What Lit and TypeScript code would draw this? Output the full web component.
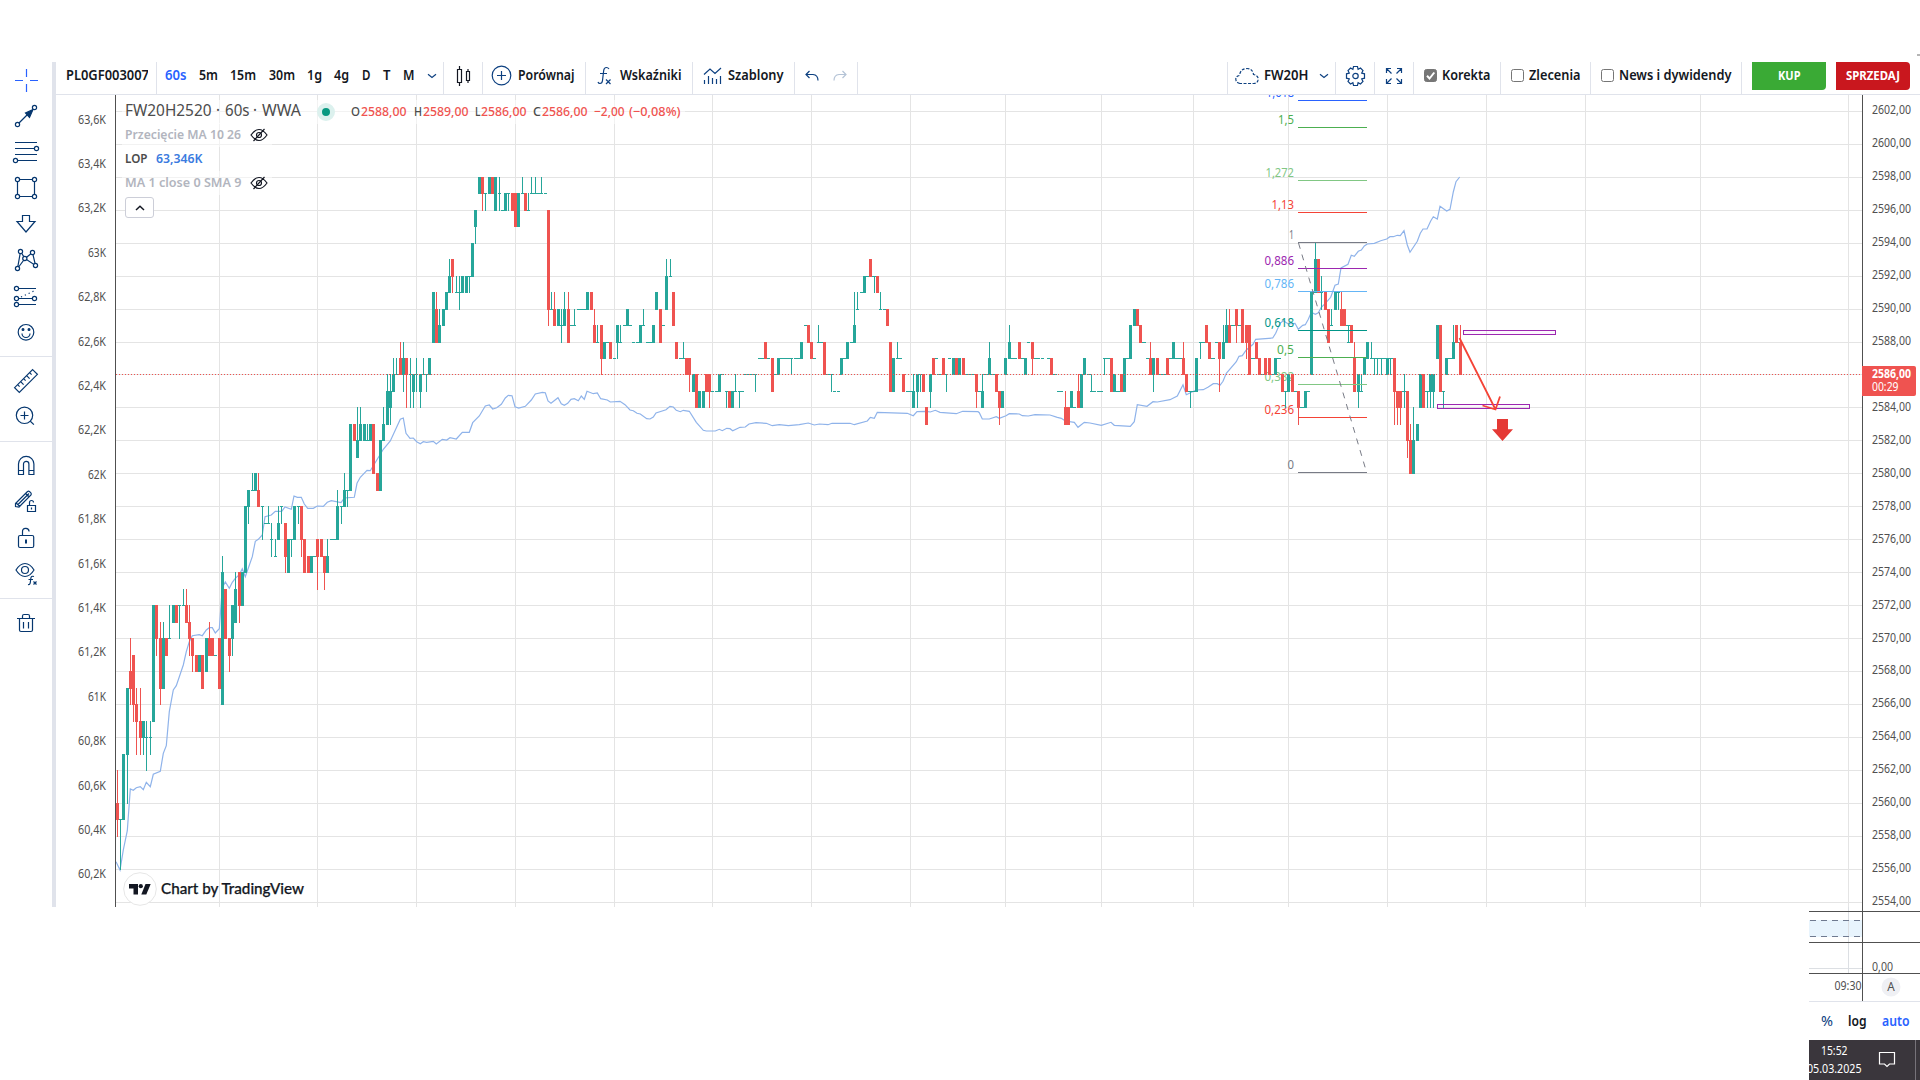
import { LitElement, html, svg, css } from "lit";
import { customElement } from "lit/decorators.js";

/* ---------- price scale ---------- */
const priceY = (p: number) => 111.3 + (102 - p) * 16.48; // p is the price minus 2500
const rowY = (p: number) => Math.floor(priceY(p));

/* Candles: "x colour bodyTop.bodyBottom[.high.low]"; "a-b=p" is a run of flat bars.
   x is counted in thirds of a pixel from the start of each segment. */
const SEGMENTS: [number, string][] = [
  [100, `52r60.59.62.58 61g59.59.59.56 70g63.59 82g67.63.67.60 91r68.67.70.66 100r69.66.69.65 109r66.65.67.63 121r65.64.67.63
  130g65.64.65.63 139g64.64.65.62 151g64.64.65.63 160g72.65 169r72.70.72.69 181r70.67.71.66 190g70.67.71.67 199r70.69
  208g70.70.72.70 220g72.71 229r72.71 238g72.72.72.70 250g72.72.73.72 259r72.71.73.71 268r71.70.72.69 277r70.69.70.68
  289r69.68 298g69.68 307r69.67 319g70.68 328r70.69.71.69 337r70.69 346g69.69 358r70.67 367g74.66.75.66 376r73.70
  388r70.69.70.68 397g72.70.72.69 406g73.71.74.71 418r74.72.74.71 427g74.72 436g78.74`],
  [0, `745g79.78.79.77 757g79.79.80.79 766g80.79 775r79.78.80.78 787g78.78.78.76 792-810=77 805g77.77.78.77 814g76.76.77.75
  826g75.75.76.75 835g77.76.78.76 844g78.78.78.77 856r77.75.77.74 865g76.74 874g76.76.76.75 883g78.76 895g78.78.78.77
  904r78.76.78.75 913r76.74 925r75.74 934g75.74 943g75.75 952r76.75.76.73 964r76.75 973r75.74.75.73 982g75.74.76.74
  991-1010=76 1012g78.76.79.76 1024g78.78.78.77 1033g79.78.80.78 1042g79.79.79.78 1051g83.79 1063r83.82 1072g82.81.84.81`],
  [330, `91g83.82.84.82 103g83.82 112g82.82.83.82 121g83.82 130r83.80 142r80.79 151g82.79 160g83.82.84.82 172g85.83.86.83
  181g85.84.86.83 190g86.85.87.85 199g86.86.87.86 211r87.86.88.86 220g87.86.88.85 229r87.86.87.84 241g86.86.87.84 250g86.85.86.84
  259g86.86.87.85 271g86.85.86.84 280g86.86.87.86 289g86.86.86.85 298g87.86 310g91.88 319r90.88.91.88 328g89.88.90.88 340g90.89
  349g91.90 358g92.91.93.91 367r93.92.93.91 379g91.91.92.91 388g91.91.92.90 397g92.91 409g92.91 418g92.92.92.91 427g94.92
  436g96.95.96.94 448g98.97 457r98.97.98.96 466g97.97.97.96 478g98.97 487r98.97 496g98.96 508g97.97.98.96 513-523=96 526g97.96
  535g97.97.97.96 547r97.96 556r97.95 565g97.95 577g97.97.98.97 586r97.96 595g96.96.97.96 604g97.97.98.97 610-640=97 616g97.97.98.97
  634g97.97.98.97 642-652=97 655r96.90.96.89 664g90.90.91.90 673r90.89.91.89 685g90.89 694g89.89.90.88 703g90.89.91.89 715r90.88.91.88
  719-738=89 733g89.89.90.89 741-768=90 772g91.90 784r91.90 793r89.88.90.88 802g88.88.89.88 814r89.87.89.86 823g88.87 828-840=88
  841r88.87 850-858=87 862g89.88.89.87 867-876=88 871g88.88.89.88 879-906=89 892g90.89 906-915=88 918-930=88 931g89.88 940g89.89.90.89
  948-970=88 970g89.88 979g91.90 991r90.88 995-1005=89 1009g92.90.93.90`],
  [650, `61g92.92.93.92 70r91.89 79r88.87 88-105=87 100g87.87.88.87 109r87.86 118r87.86.87.85 130g86.85 139r86.84 148g85.84 160g85.84
  169r86.85 178r86.85.86.84 183-192=85 195-205=85 208g86.85 212-222=86 225-234=85 229g85.85.85.84 238r85.84 247g85.84 256g85.85.86.85
  264-282=85 268g85.85.85.84 280-320=86 316g86.86.86.85 324-360=87 346r88.87 367r87.85 372-382=86 385g87.86 390-430=87 424g87.87.87.86
  432-452=87 454g88.87 462-472=89 475r89.88 484r88.87 486-498=87 501-520=88 505g88.88.89.88 523r88.86 529-551=86 544g86.86.86.85
  549-558=85 561-570=85 574g87.86 579-590=87 592g88.87 600-612=88 613g89.88.91.88 622g90.90.91.90 630-642=91 643g92.91 648-658=92
  661r93.92 664-672=92 673g92.92.92.91 682r92.91 691g90.90.91.90 698-710=90 712r90.89 721r88.85 730g87.85 738-756=87 742g87.87.88.87
  760r86.85 768-790=85 790g85.84.86.84 802g86.85.86.84 811g86.86.86.85 820r86.85 829r84.83 841g86.85.86.84 850r87.86 854-864=87
  862-876=86 880r87.86 889g86.86.86.85 894-904=87 910g87.86 919r87.86 928g87.86 940r87.86 945-975=86 979r86.85.86.84 983-990=85`],
  [970, `25-38=85 37g85.84.86.84 40-55=86 58g87.86.88.86 64-76=86 79r86.85 88r85.84.85.83 97g85.84 106g87.86 118g88.87.89.87 123-142=87
  148r88.87 153-162=87 166g87.86 170-180=88 187r88.87.88.86 190-210=87 213-222=87 230-240=87 244r87.86 249-262=86 260-280=85
  286r84.83.85.83 295r84.83 304g85.84 309-319=84 325r85.84.86.84 334g86.84 343g87.86 350-364=86 364g85.85.86.85 362-379=85 381-399=85
  403g87.87.87.86 403-420=87 424r87.85 433g86.85 438-450=85 454r86.85 463g87.85 468-480=87 481g89.87 493g90.89 502r90.89 511r89.88
  516-528=88 528-537=87 541r87.86.88.86 550g87.86.87.85 562r87.86 567-588=86 592r87.86 597-610=87 610g88.87 615-636=87 640r87.86.88.86
  649r86.85 655-676=85 661g85.85.85.84 679g87.85 691g88.88.88.87 692-706=88 709r89.88 718r88.87 723-735=87 736-745=88 748r88.87.88.85
  760g88.87.89.87 769g89.88.90.88 778r89.88.90.88 783-796=89 799r90.89.90.88 803-813=89 817r90.88 829r89.88.89.87 838r89.86 843-855=87
  859r88.87 868r87.86 872-882=86 886r87.86 898r87.86 903-912=86 916g87.86 922-933=87 937r86.85 946g85.85.85.84 955g86.85`],
  [1220, `217r86.85 222-232=85 235r85.84.85.83 240-253=84 256g85.84 260-270=85 274g91.86 279-283=91 286g93.91.94.91 295r93.91 304g91.91.92.90
  316r91.90 325r90.88 334g89.89.90.89 346g91.90 355g91.91.91.90 364r90.89.91.89 373r90.89 378-392=89 385g88.88.89.88 394r89.88
  403r87.85.88.85 415g86.85.86.84 424g85.85.86.85 433g87.86 442g88.87 454g87.87.88.87 449-520=87 463g87.87.87.86 472g87.87.87.86
  484g87.87.87.86 502g87.86 511g87.87.87.86 523r87.85.87.83 532r85.84.85.83 541r85.84.85.83 547-562=85 553g85.85.86.84 562r85.82.85.81
  571r82.80.83.80 580g82.80.84.80 592g83.82 601g86.84 610r86.84 616-628=85 622g85.85.85.84 631g86.85.86.84 640g86.85.86.84 652g89.87
  661r89.85 670g85.85.85.84 679g87.86 684-698=87 700g88.87.89.87 709r89.88 713-717=88 721r88.86.89.86`],
];

/* Open interest line: x,y pairs in thirds of a pixel from each segment's origin. */
const OPEN_INTEREST: [number, number, string][] = [
  [100, 540, "48,965 60,990 70,930 82,872 91,747 100,751 109,743 121,740 130,749 139,727 151,740 160,703 181,694 190,640 199,617 208,515 220,450 229,437 250,375 259,335 268,305 277,287 298,284 307,287 319,270 328,263 337,263 346,279 358,266 367,143 376,126 388,145 397,127 406,115 418,104 427,86 436,110 457,50 466,4"],
  [0, 300, "775,718 787,705 795,650 814,645 826,634 845,634 855,621 874,628 882,588 892,592 904,592 913,612 923,625 940,625 952,618 970,619 982,607 994,602 1023,608 1033,594"],
  [330, 160, "73,1012 81,970 91,952 111,931 121,932 160,868 181,843 211,778 220,774 228,820 240,835 250,834 260,845 271,851 280,845 290,847 310,844 319,852 337,838 350,840 360,833 379,837 397,817 418,817 428,788 448,768 466,738 478,735 488,747 500,743 514,733 526,714 535,706 546,707 555,740 566,744 586,739 604,720 616,702 637,697 646,698 654,723 663,730 684,713 694,731 703,736 713,730 723,718 733,716 745,722 754,708 763,718 771,694 790,701 802,699 812,716 832,720 841,726 870,724 885,734 900,750 910,752 921,760 931,762 950,776 960,777"],
  [650, 240, "10,531 18,519 48,509 60,499 70,501 79,511 91,515 100,511 118,514 139,547 160,571 169,573 196,573 208,568 217,572 230,565 240,566 248,572 270,562 286,561 297,552 318,548 349,550 367,557 388,554 415,557 448,554 475,549 493,555 508,552 534,554 546,550 600,550 613,554 652,543 661,532 673,535 682,517 772,520 790,527 801,515 829,514 841,516 856,511 870,517 919,521 938,514 984,515"],
  [970, 240, "28,518 37,537 58,537 79,530 88,535 108,527 118,521 148,522 157,527 175,528 195,524 240,525 262,532 274,535 286,543 313,547 324,562 343,547 360,549 394,556 423,547 433,556 481,559 493,545 502,494 531,499 549,485 562,486 600,479 622,468 639,434 649,464 679,450 700,449 715,441 730,431 742,431 750,436 759,424 769,400 799,365 807,349 817,347 829,330 849,313"],
  [1220, 90, "107,748 158,744 167,730 180,700 190,692 205,702 225,700 235,718 248,706 256,704 265,688 274,667 286,673 295,668 304,652 316,640 332,622 345,586 355,582 363,534 384,523 394,496 403,499 415,484 424,480 433,468 442,462 463,460 482,452 500,447 510,440 520,440 532,436 541,437 552,422 562,465 570,487 592,454 601,430 609,417 621,417 632,393 640,380 652,387 660,349 680,363 690,358 700,306 708,275 719,261"],
];

const VERTICALS = [219, 317, 416, 515, 614, 712, 811, 910, 1005, 1101, 1193, 1288, 1387, 1486, 1585, 1700, 1848];

const FIB: [string, number, string, number][] = [
  ["1,618", 100, "#2962ff", 28], ["1,5", 127, "#4caf50", 16], ["1,272", 180, "#81c784", 28.5], ["1,13", 212, "#f44336", 22.5],
  ["1", 242, "#787b86", 5], ["0,886", 268, "#9c27b0", 29.5], ["0,786", 291, "#64b5f6", 29.5], ["0,618", 330, "#009688", 29.5],
  ["0,5", 357, "#4caf50", 17], ["0,382", 384, "#81c784", 29.5], ["0,236", 417, "#f44336", 29.5], ["0", 472, "#787b86", 6.5],
];

function candlePaths() {
  const d = { g: "", r: "" };
  for (const [ox, text] of SEGMENTS) {
    for (const item of text.trim().split(/\s+/)) {
      const run = /^(\d+)-(\d+)=(\d+)$/.exec(item);
      if (run) {
        const a = ox + Math.round(+run[1] / 3), b = ox + Math.round(+run[2] / 3);
        d.g += `M${a} ${rowY(+run[3])}h${b - a}v1h${a - b}z`;
        continue;
      }
      const m = /^(\d+)([gr])([\d.]+)$/.exec(item);
      if (!m) continue;
      const x = ox + Math.floor(+m[1] / 3);
      const [top, bottom, high = top, low = bottom] = m[3].split(".").map(Number);
      const box = (x0: number, w: number, hi: number, lo: number) => {
        const y = rowY(hi), h = rowY(lo) - y + 1;
        return `M${x0} ${y}h${w}v${h}h${-w}z`;
      };
      d[m[2] as "g" | "r"] += box(x - 1, 3, top, bottom) + (high > top || low < bottom ? box(x, 1, high, low) : "");
    }
  }
  return d;
}
const CANDLES = candlePaths();
const OI_POINTS = OPEN_INTEREST.map(([ox, oy, s]) =>
  s.split(" ").map((p) => {
    const [x, y] = p.split(",").map(Number);
    return `${(ox + x / 3).toFixed(1)},${(oy + y / 3).toFixed(1)}`;
  }).join(" ")).join(" ");

/* Text set to an exact advance width; baseline at 12px of a 16px box. */
const label = (text: string, width: number, cls = "") => html`<svg class="t ${cls}" width=${width} height="16"><text x="0" y="12" textLength=${width} lengthAdjust="spacingAndGlyphs">${text}</text></svg>`;

const dot = (x: number, y: number) => svg`<circle cx=${x} cy=${y} r="2.1" fill="#fff"/>`;
const RAIL: any[][] = [
  [
    svg`<g stroke="#2962ff"><path d="M15 18.5h8M30 18.5h8M26.5 7v8M26.5 22v8"/></g>`,
    svg`<path d="M18 26L28 16"/><path d="M33 11.5L25.5 15L29.5 19.5Z" fill="#06376f"/>${dot(17.5, 26.5)}${dot(34.5, 9.5)}`,
    svg`<path d="M15 8.5h22M15 14.5h20M15 20.5h22M17 26.5h20"/>${dot(36.5, 14.5)}${dot(15.5, 26.5)}`,
    svg`<path d="M17.5 9.5h17v17h-17z"/>${dot(17.5, 9.5)}${dot(34.5, 9.5)}${dot(17.5, 26.5)}${dot(34.5, 26.5)}`,
    svg`<path d="M22.5 9.5h7v6h5.5L26 26L17 15.5h5.5z"/>`,
    svg`<path d="M17.5 26.5L20.5 9.5L25 16.5L32.5 10.5L35.5 23.5L25 16.5z"/>${dot(20.5, 9.5)}${dot(32.5, 10.5)}${dot(24.8, 16.5)}${dot(17.5, 26.5)}${dot(35.5, 23.5)}`,
    svg`<path d="M18 10.5h18M18 20.5h16M18 26.5h18"/><path d="M21 19L36 12" stroke-dasharray="1.2 3"/>${dot(16.5, 10.5)}${dot(16.5, 20.5)}${dot(34.5, 20.5)}${dot(16.5, 26.5)}`,
    svg`<circle cx="26" cy="18.3" r="7.8"/><circle cx="23" cy="15.5" r=".9" fill="#06376f"/><circle cx="29" cy="15.5" r=".9" fill="#06376f"/><path d="M22 19.5a4 4 0 0 0 8 0"/>`,
  ],
  [
    svg`<path d="M32.6 6.6L37.4 11.3L19.3 29.4L14.6 24.7zM17.6 21.7l2 2M20.6 18.7l3 3M23.6 15.7l2 2M26.6 12.7l3 3M29.6 9.7l2 2"/>`,
    svg`<circle cx="24.5" cy="16.3" r="8.2"/><path d="M30.3 22.2l3.6 3.4M24.5 12.5v8M20.5 16.5h8"/>`,
  ],
  [
    svg`<path d="M18.5 26.5V16a7.7 7.7 0 0 1 15.4 0V26.5h-5V16a2.7 2.7 0 0 0-5.4 0V26.5zM18.5 22.5h5M28.9 22.5h5"/>`,
    svg`<path d="M15.5 19.5L27.5 7.5Q29 6.5 31 9Q31.500 10 31 11L19 23L15.500 22.500zM18 20.500L29 9.500M20 22.500L16 19M25.500 9.500l4 3.500"/><path d="M27.500 21.500h8v6h-8zM29.500 21.500v-3a2 2 0 0 1 4 0M31.500 23.500v2"/>`,
    svg`<rect x="18.500" y="15.500" width="15.200" height="12" rx="1.500"/><path d="M22.500 15.500v-3.500a3.300 3.300 0 0 1 6.600-.5"/><path d="M26 19.500v4" stroke-width="2"/>`,
    svg`<path d="M16 14Q20 7.500 25 7.500T34 14Q30 20.500 25 20.500T16 14z"/><circle cx="25" cy="14" r="3.500"/><path d="M34 20.500q-3-1-3.200 2l-.5 4q-.3 2.500-2.300 2M28.500 23.500h4.500M33.500 25.500l3 3M36.500 25.500l-3 3"/>`,
  ],
  [
    svg`<path d="M17 13.500h18M19.500 13.500v11.500q0 1.500 1.500 1.500h10q1.500 0 1.500-1.500v-11.500M22.500 13.500v-2.500q0-1.500 1.500-1.500h4q1.500 0 1.500 1.500v2.500M23.500 17v6.500M28.500 17v6.500"/>`,
  ],
];

const chevron = html`<svg class="ic chev" width="10" height="8"><path d="M1 2.300l4 3.200l4-3.200"/></svg>`;
const eyeOff = html`<svg class="eye" width="18" height="16"><path d="M1 8Q5 2.500 9 2.500T17 8Q13 13.500 9 13.500T1 8zM3.500 14L14.500 2"/><circle cx="9" cy="8" r="2.500"/></svg>`;

@customElement("app-root")
export class AppRoot extends LitElement {
  static styles = css`
    :host { display: block; width: 1920px; height: 1080px; background: #fff; overflow: hidden; font-family: "Noto Sans", "Open Sans", sans-serif; }
    svg { display: block; flex: none; }
    .t { font-size: 11.800px; fill: #505050; overflow: visible; }
    .tb { font-size: 13.800px; fill: #131722; font-weight: 600; }
    .sel { fill: #2962ff; }
    .pct { fill: #0d4080; font-weight: 400; }
    .top { height: 62px; display: flex; justify-content: flex-end; }
    .mark { width: 3px; height: 2px; margin-top: 54px; background: #b5b5b5; }
    .body { display: flex; height: 845px; }
    .rail { width: 52px; border-right: 4px solid #e0e3eb; }
    .rail svg { fill: none; stroke: #06376f; stroke-width: 1.200; }
    .rule { height: 1px; background: #e0e3eb; margin: 6px 0; }
    .main { width: 1864px; }
    .toolbar { display: flex; height: 32px; border-bottom: 1px solid #e0e3eb; }
    .cell { box-sizing: border-box; display: flex; align-items: center; border-right: 1px solid #e0e3eb; padding-bottom: 5px; flex: none; }
    .cell .tb { margin-left: -1px; margin-right: 1px; }
    .ic { fill: none; stroke: #0d4080; stroke-width: 1.200; }
    .chev { margin-left: -1px; }
    .black { stroke: #131722; }
    .faint { stroke: #b4c3d6; }
    .c1 { width: 101px; padding-left: 9.500px; } .clip { width: 82px; overflow: hidden; }
    .clip .tb { margin-left: 0; }
    .c2 { width: 287px; padding-left: 9px; gap: 12.400px; }
    .c3 { width: 39px; justify-content: center; }
    .c4 { width: 103px; padding-left: 8px; gap: 7px; }
    .c5 { width: 107px; padding-left: 10px; gap: 8px; }
    .c6 { width: 102px; padding-left: 10px; gap: 7px; }
    .c7 { width: 63px; padding-left: 10px; gap: 14px; }
    .gap { flex: 1; }
    .r1 { width: 109px; border-left: 1px solid #e0e3eb; padding-left: 7px; }
    .r1 .tb { margin: 0 12px 0 4.500px; }
    .k { padding-left: 10px; gap: 6px; }
    .k1 { width: 87px; } .k2 { width: 90px; } .k3 { width: 151px; }
    .box { box-sizing: border-box; width: 13px; height: 13px; border: 1px solid #767676; border-radius: 2.500px; flex: none; }
    .on { background: #767676; }
    .btn { width: 74px; height: 28px; margin-left: 10px; background: #3aaa35; border-radius: 0 0 4px 0; display: flex; align-items: center; justify-content: center; }
    .btn svg { margin-top: -1px; }
    .sell { background: #c9171e; margin-right: 10px; border-radius: 0 4px 4px 0; }
    .btn .t { fill: #fff; font-weight: 700; font-size: 12px; }
    .row { display: flex; height: 812px; }
    .left { width: 59px; border-right: 1px solid #505050; box-sizing: content-box; overflow: hidden; }
    .left .pad { padding: 2.300px 9px 0 0; }
    .ly { height: 44.410px; display: flex; align-items: center; justify-content: flex-end; }
    .right { position: relative; width: 57px; border-left: 1px solid #505050; }
    .right .pad { height: 812px; overflow: hidden; padding-left: 9px; box-sizing: border-box; }
    .pad .shift { margin-top: -1.200px; }
    .ry { height: 32.960px; display: flex; align-items: center; }
    .now { position: absolute; left: -1px; top: 271px; width: 44px; height: 30px; padding-left: 10px; background: #ef5350; border-radius: 0 2px 2px 0; }
    .now .t { fill: #fff; font-weight: 700; height: 13px; } .now .thin { font-weight: 400; }
    .chart { position: relative; width: 1746px; height: 812px; }
    .fib { font-size: 13.300px; text-anchor: end; }
    .legend { position: absolute; left: 6px; top: 5px; }
    .lr { display: flex; align-items: center; height: 24px; width: max-content; padding: 0 4px 0 3px; background: rgba(255,255,255,.5); }
    .second { margin-top: -1px; }
    .big { font-size: 15.500px; fill: #4c4c4c; } .mid { font-size: 13.300px; fill: #4c4c4c; font-weight: 500; } .red { fill: #ef5350; }
    .off { font-size: 13px; fill: #b2b5be; font-weight: 600; } .name { font-size: 13px; fill: #4c4c4c; font-weight: 600; } .blue { fill: #3b7be0; }
    .live { width: 8px; height: 8px; border-radius: 50%; background: #089981; border: 5px solid #dcf1ee; margin: 0 16.500px 0 15.500px; }
    .eye { fill: none; stroke: #131722; stroke-width: 1.200; margin-left: 8.500px; }
    .collapse { box-sizing: border-box; width: 29px; height: 21px; margin: 2px 0 0 3px; border: 1px solid #ccced8; border-radius: 3px; background: #fff; display: flex; align-items: center; justify-content: center; }
    .credit { position: absolute; left: 7px; top: 777px; display: flex; align-items: center; gap: 3.500px; }
    .brand { font-family: Lato, sans-serif; font-size: 14.500px; font-weight: 500; fill: #131722; stroke: #131722; stroke-width: .25px; margin-top: 2px; }
    .foot { width: 111px; height: 173px; margin-left: auto; }
    .panes { display: flex; height: 94px; border-bottom: 1px solid #e0e3eb; }
    .scale { width: 58px; height: 94px; }
    .modes { display: flex; align-items: center; height: 38px; padding-left: 12px; gap: 15px; }
    .modes svg { margin-top: 2px; }
    .task { display: flex; height: 40px; background: #3a363c; overflow: hidden; }
    .clock { width: 53px; height: 40px; display: flex; flex-direction: column; align-items: flex-end; padding-top: 3px; box-sizing: border-box; gap: 2px; overflow: hidden; }
    .clock .t { fill: #fff; font-size: 12px; margin-right: .500px; } .clock .time { margin-right: 14.500px; }
    .note { margin: 11px 0 0 16px; } .edge { width: 1px; background: #77737a; margin-left: 19px; }
  `;

  private toolbar() {
    const frames: [string, number, string][] = [["60s", 21.5, "sel"], ["5m", 19, ""], ["15m", 26, ""], ["30m", 26, ""], ["1g", 15, ""], ["4g", 15, ""], ["D", 8.5, ""], ["T", 7.5, ""], ["M", 11.5, ""]];
    return html`<div class="toolbar">
      <div class="cell c1"><div class="clip">${label("PL0GF003007", 83, "tb")}</div></div>
      <div class="cell c2">${frames.map(([s, w, c]) => label(s, w, "tb " + c))}${chevron}</div>
      <div class="cell c3"><svg class="ic black" width="16" height="22"><path d="M2.500 4.500h4v13h-4zM4.500 1v3.500M4.500 17.500V21M11.500 6.500h3v9h-3zM13 4v2.500M13 15.500V18"/></svg></div>
      <div class="cell c4"><svg class="ic" width="21" height="21"><circle cx="10.500" cy="10.500" r="9.300"/><path d="M10.500 6v9M6 10.500h9"/></svg>${label("Porównaj", 56.5, "tb")}</div>
      <div class="cell c5"><svg class="ic" width="17" height="20"><path d="M13 3Q12 1.500 10.500 1.500Q8 1.500 7.700 4.500L6.500 14.500Q6.200 17.500 4 17.500Q2.500 17.500 2 16M4 7.500h7M10 13.500l4.500 4.500M14.500 13.500l-4.500 4.500"/></svg>${label("Wskaźniki", 61.5, "tb")}</div>
      <div class="cell c6"><svg class="ic" width="19" height="20"><path d="M1 8.500L7 3l5 4.500L18 2M1.500 18v-4M5.500 18v-8M9.500 18v-6M13.500 18v-5M17.500 18v-8"/></svg>${label("Szablony", 55.5, "tb")}</div>
      <div class="cell c7"><svg class="ic" width="14" height="12"><path d="M4.500 1L1 4.500L4.500 8M1 4.500h7q5 .5 5 6"/></svg><svg class="ic faint" width="14" height="12"><path d="M9.500 1L13 4.500L9.500 8M13 4.500h-7q-5 .5-5 6"/></svg></div>
      <div class="gap"></div>
      <div class="cell r1"><svg class="ic" width="24" height="18"><path stroke-dasharray="3 1.500" d="M5 16.500Q.8 15.500 .8 12Q1 9 4.500 8.500Q5.500 1.500 12 1.500Q17.500 1.500 18.500 7.500Q23.200 8.500 23.200 12Q23 16 19 16.500z"/></svg>${label("FW20H", 44.5, "tb")}${chevron}</div>
      <div class="cell c3"><svg class="ic" width="21" height="22"><circle cx="10.500" cy="11" r="2.700"/><path d="M8.500 1.500h4l.6 2.800l2.400-1.300l2.500 2.500l-1.300 2.500l2.800.8v4.400l-2.800.8l1.300 2.500l-2.500 2.500l-2.400-1.300l-.6 2.800h-4l-.6-2.800l-2.400 1.300L3 16.500l1.300-2.500l-2.800-.8V8.800l2.800-.8L3 5.500L5.500 3l2.400 1.300z"/></svg></div>
      <div class="cell c3"><svg class="ic" width="18" height="18"><path d="M1.500 6v-4.500h4.500M1.500 1.500l5 5M12 1.500h4.500V6M16.500 1.500l-5 5M1.500 12v4.500h4.500M1.500 16.500l5-5M12 16.500h4.500V12M16.500 16.500l-5-5"/></svg></div>
      <div class="cell k k1"><div class="box on"><svg width="11" height="11"><path d="M2 5.800l2.500 2.700L9.300 2.500" fill="none" stroke="#fff" stroke-width="2"/></svg></div>${label("Korekta", 48.5, "tb")}</div>
      <div class="cell k k2"><div class="box"></div>${label("Zlecenia", 51.5, "tb")}</div>
      <div class="cell k k3"><div class="box"></div>${label("News i dywidendy", 112.5, "tb")}</div>
      <div class="btn">${label("KUP", 22.5)}</div>
      <div class="btn sell">${label("SPRZEDAJ", 54)}</div>
    </div>`;
  }

  private chart() {
    const rows = Array.from({ length: 25 }, (_, i) => rowY(102 - i * 2));
    return html`<svg width="1746" height="812" viewBox="116 95 1746 812">
      <g fill="#e4e4e4">
        ${VERTICALS.map((x) => svg`<rect x=${x} y="95" width="1" height="812"/>`)}
        ${rows.map((y) => svg`<rect x="116" y=${y} width="1746" height="1"/>`)}
      </g>
      <polyline points=${OI_POINTS} fill="none" stroke="#8fb3ea" stroke-width="1.200"/>
      ${FIB.map(([s, y, c, w]) => svg`<text class="fib" x="1294" y=${y - 3} fill=${c} textLength=${w} lengthAdjust="spacingAndGlyphs">${s}</text>`)}
      <path d=${CANDLES.g} fill="#26a69a"/>
      <path d=${CANDLES.r} fill="#ef5350"/>
      ${FIB.map(([, y, c]) => svg`<rect x="1298" y=${y} width="69" height="1" fill=${c}/>`)}
      <path d="M1298.500 243L1366.500 472" stroke="#787b86" stroke-dasharray="6 6" fill="none"/>
      <path d="M116 374.500H1862" stroke="#ef5350" stroke-dasharray="1 2"/>
      <g fill="#9c27b0" fill-opacity=".04" stroke="#9c27b0"><rect x="1463.500" y="330.500" width="92" height="4"/><rect x="1437.500" y="404.500" width="92" height="4"/></g>
      <path d="M1459.500 338L1495.500 409.500M1482.500 405.500L1495.500 409.500L1500 396.500" stroke="#f44336" stroke-width="1.800" fill="none"/>
      <path d="M1497 419h11v10.300h5L1502.500 441L1492 429.300h5z" fill="#e53935"/>
    </svg>
    <div class="legend">
      <div class="lr">${label("FW20H2520", 86.5, "big")}${this.sp(4.5)}${label("·", 4, "big")}${this.sp(4.5)}${label("60s", 24.5, "big")}${this.sp(4)}${label("·", 4, "big")}${this.sp(5)}${label("WWA", 39, "big")}
        <div class="live"></div>
        ${label("O", 9, "mid")}${this.sp(1)}${label("2588,00", 45.5, "mid red")}${this.sp(7)}${label("H", 8, "mid")}${this.sp(1)}${label("2589,00", 45.5, "mid red")}${this.sp(6.5)}${label("L", 5.5, "mid")}${this.sp(1)}${label("2586,00", 45.5, "mid red")}${this.sp(6.5)}${label("C", 8, "mid")}${this.sp(1)}${label("2586,00", 45.5, "mid red")}${this.sp(6.5)}${label("−2,00", 30.5, "mid red")}${this.sp(4.5)}${label("(−0,08%)", 51.5, "mid red")}</div>
      <div class="lr second">${label("Przecięcie MA 10 26", 116, "off")}${eyeOff}</div>
      <div class="lr">${label("LOP", 22.5, "name")}${this.sp(8.5)}${label("63,346K", 46.5, "name blue")}</div>
      <div class="lr">${label("MA 1 close 0 SMA 9", 116.5, "off")}${eyeOff}</div>
      <div class="collapse"><svg class="ic black" width="10" height="8"><path d="M1 6l4-3.800l4 3.800" stroke-width="1.500"/></svg></div>
    </div>
    <div class="credit">
      <svg width="34" height="34"><circle cx="17" cy="17" r="16.300" fill="#fff" stroke="#e6e6e6"/><g fill="#131722"><path d="M6 12h9v10.500h-4.500V16.500H6z"/><circle cx="17.800" cy="14.200" r="2.100"/><path d="M22.500 12h5.200L23.300 22.500h-5z"/></g></svg>
      ${label("Chart by TradingView", 143, "brand")}
    </div>`;
  }

  private sp(w: number) {
    return html`<svg width=${w} height="1"></svg>`;
  }

  render() {
    const left = Array.from({ length: 18 }, (_, i) => {
      const v = 636 - i * 2;
      return v % 10 ? `${Math.floor(v / 10)},${v % 10}K` : `${v / 10}K`;
    });
    const right = Array.from({ length: 25 }, (_, i) => `${2602 - i * 2},00`);
    return html`
      <div class="top"><div class="mark"></div></div>
      <div class="body">
        <div class="rail">${RAIL.map((group, i) => html`${i ? html`<div class="rule"></div>` : ""}${group.map((g) => html`<svg width="52" height="36">${g}</svg>`)}`)}</div>
        <div class="main">
          ${this.toolbar()}
          <div class="row">
            <div class="left"><div class="pad">${left.map((s) => html`<div class="ly">${label(s, s.length > 3 ? 28 : 18)}</div>`)}</div></div>
            <div class="chart">${this.chart()}</div>
            <div class="right"><div class="pad"><div class="shift">${right.map((s) => html`<div class="ry">${label(s, 39)}</div>`)}</div></div>
              <div class="now">${label("2586,00", 39)}${label("00:29", 26.5, "thin")}</div>
            </div>
          </div>
        </div>
      </div>
      <div class="foot">
        <div class="panes">
          <svg width="53" height="94"><path d="M0 13h53v17H0z" fill="#e8f4fd"/><path d="M39.500 0V66M0 61.500h53" stroke="#dcdfe3"/><path d="M1 13.500h52M1 29.500h52" stroke="#6f7a90" stroke-dasharray="6 5"/><path d="M0 4.500h53M0 35.500h53M0 66.500h53" stroke="#505050"/><text class="t" x="25.500" y="83" textLength="27" lengthAdjust="spacingAndGlyphs">09:30</text></svg>
          <svg class="scale" width="58" height="94"><path d="M.5 0V94M0 4.500h58M0 35.500h58M0 66.500h58" stroke="#505050"/><text class="t" x="10" y="64" textLength="21" lengthAdjust="spacingAndGlyphs">0,00</text><circle cx="29" cy="80" r="9.500" fill="#eff0f4"/><text class="t" x="25.200" y="84" textLength="7.500" lengthAdjust="spacingAndGlyphs">A</text></svg>
        </div>
        <div class="modes">${label("%", 12, "tb pct")}${label("log", 18.5, "tb")}${label("auto", 27.5, "tb sel")}</div>
        <div class="task">
          <div class="clock"><div class="time">${label("15:52", 26.5)}</div>${label("05.03.2025", 54.5)}</div>
          <svg class="note" width="18" height="18"><path d="M1.500 1.500h15v11.500h-5l-2.500 2.500l-2.500-2.500h-5z" fill="none" stroke="#fff" stroke-width="1.200"/></svg>
          <div class="edge"></div>
        </div>
      </div>`;
  }
}
